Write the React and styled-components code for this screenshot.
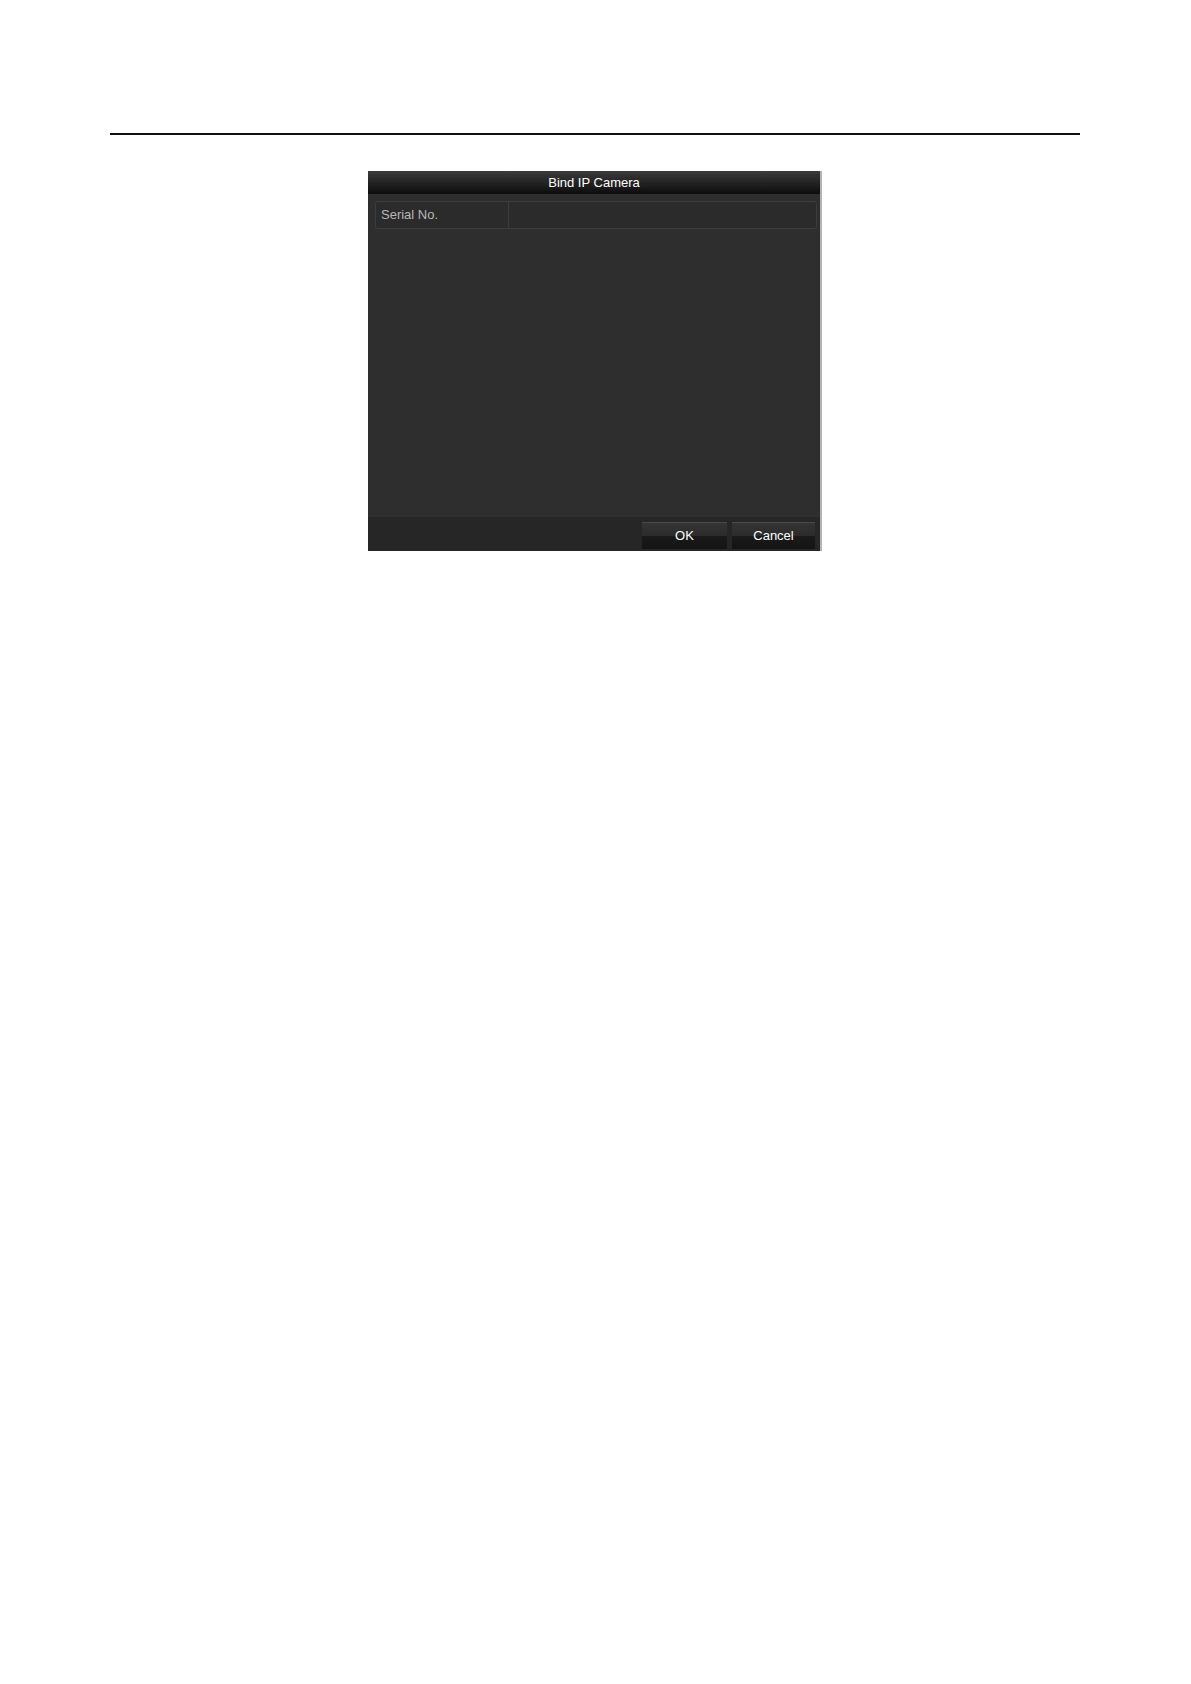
import React from "react"
import styled, { createGlobalStyle } from "styled-components"

const GlobalStyle = createGlobalStyle`
  html, body {
    margin: 0;
    padding: 0;
    background: #fff;
  }
  body {
    font-family: "Liberation Sans", Arial, sans-serif;
  }
`

const Page = styled.div`
  width: 1191px;
  min-height: 1684px;
  padding-top: 133px;
  box-sizing: border-box;
  background: #fff;
`

const Rule = styled.hr`
  margin: 0 111px 0 110px;
  border: 0;
  height: 1.5px;
  background: #111;
`

const Dialog = styled.div`
  margin: 36px 0 0 368px;
  width: 452px;
  height: 380px;
  display: flex;
  flex-direction: column;
  background: #2d2d2d;
  border-right: 2px solid #b4b4b4;
`

const TitleBar = styled.div`
  height: 23px;
  flex: none;
  display: flex;
  align-items: center;
  justify-content: center;
  background: linear-gradient(#3c3c3c 0%, #262626 45%, #0c0c0c 100%);
  color: #fff;
  font-size: 13px;
`

const Body = styled.div`
  flex: 1;
  padding: 7px 3px 0 7px;
  background: #2e2e2e;
`

const Row = styled.div`
  height: 28px;
  display: grid;
  grid-template-columns: 133px 1fr;
  box-sizing: border-box;
  border: 1px solid #3d3d3d;
  border-radius: 3px;
  background: #2b2b2b;
`

const Label = styled.div`
  display: flex;
  align-items: center;
  padding-left: 5px;
  color: #b8b8b8;
  font-size: 13px;
  border-right: 1px solid #3e3e3e;
`

const Value = styled.div``

const Footer = styled.div`
  height: 34px;
  flex: none;
  display: flex;
  justify-content: flex-end;
  gap: 5px;
  padding: 5px 5px 0 0;
  box-sizing: border-box;
  background: #262626;
`

const Button = styled.button`
  width: ${(p) => p.$w}px;
  height: 27px;
  padding: 0;
  border: 0;
  border-top: 1px solid #4a4a4a;
  background: linear-gradient(#343434 0%, #2c2c2c 48%, #191919 52%, #141414 100%);
  color: #fff;
  font-family: "Liberation Sans", Arial, sans-serif;
  font-size: 13px;
  display: flex;
  align-items: center;
  justify-content: center;
`

export default function App() {
  return (
    <>
      <GlobalStyle />
      <Page>
        <Rule />
        <Dialog>
          <TitleBar>Bind IP Camera</TitleBar>
          <Body>
            <Row>
              <Label>Serial No.</Label>
              <Value />
            </Row>
          </Body>
          <Footer>
            <Button $w={85}>OK</Button>
            <Button $w={83}>Cancel</Button>
          </Footer>
        </Dialog>
      </Page>
    </>
  )
}
